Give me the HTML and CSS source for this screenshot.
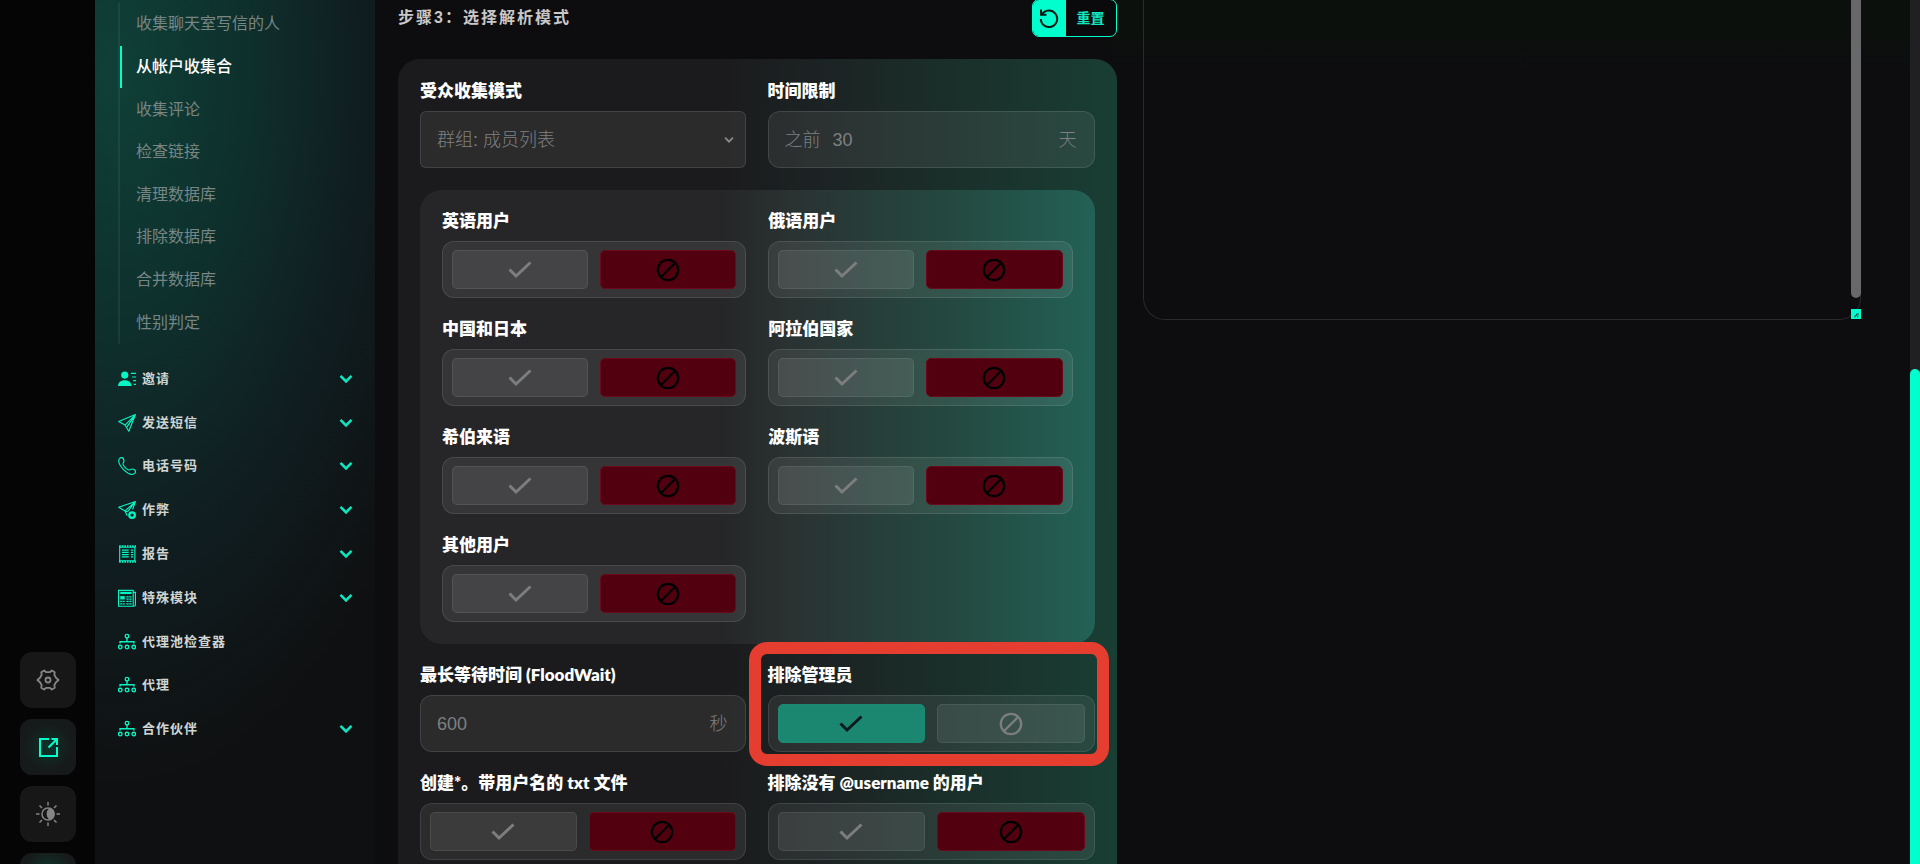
FILE: index.html
```html
<!DOCTYPE html>
<html lang="zh-CN">
<head>
<meta charset="utf-8">
<title>步骤3：选择解析模式</title>
<link rel="stylesheet" href="styles.css">
</head>
<body>
<svg class="sprite" aria-hidden="true">
  <symbol id="check" viewBox="0 0 24 24"><path d="M1.5 11.5 8 18 22.500 4.500" fill="none" stroke="currentColor" stroke-width="3"/></symbol>
  <symbol id="ban" viewBox="0 0 24 24"><circle cx="12" cy="12" r="10.200" fill="none" stroke="currentColor" stroke-width="2.300"/><path d="M4.800 19.200 19.200 4.800" stroke="currentColor" stroke-width="2.300"/></symbol>
  <symbol id="chevron" viewBox="0 0 14 10"><path d="M1.500 1.800 7 7.300l5.500-5.500" fill="none" stroke="currentColor" stroke-width="2.600"/></symbol>
  <symbol id="person" viewBox="0 0 16 16"><circle cx="6" cy="4.500" r="3.200" fill="currentColor"/><path d="M0 14.300c0-3.300 2.500-5.300 6-5.300s6 2 6 5.300z" fill="currentColor"/><path d="M11.500 3H16M12.500 6.200H16M13.500 9.400H16M14 12.800h2" stroke="currentColor"/></symbol>
  <symbol id="plane" viewBox="0 0 16 16"><path d="M15.500.5 9.600 15.300 6.200 9.800.6 6.600zM15.500.5 6.200 9.800M15.500.5 8 11.500" fill="none" stroke="currentColor" stroke-linejoin="round"/></symbol>
  <symbol id="plane-plus" viewBox="0 0 16 16"><path d="M8.500 9.500 6.200 8.800.6 5.600 15.500.5 13 7.500M15.500.5 6.200 8.800M8.200 13.200 6.200 8.800M15.500.5 8.500 9.500" fill="none" stroke="currentColor" stroke-linejoin="round"/><circle cx="12.500" cy="12.500" r="2.500" fill="none" stroke="currentColor" stroke-width="2"/></symbol>
  <symbol id="phone" viewBox="0 0 16 16"><path d="M.6 3.200C.6 1.400 2 .5 3.200.6c1 .1 2 1.600 2.100 2.900.1 1.300-1 1.800-.9 2.700.2 1.600 3.600 5.200 5.400 5.400.9.100 1.500-1 2.800-.9 1.300.1 2.800 1 2.900 2.100.1 1.300-.9 2.700-2.800 2.700C8 15.400.7 8.300.6 3.200z" fill="none" stroke="currentColor"/></symbol>
  <symbol id="report" viewBox="0 0 16 16"><path d="M1.500 1v14M15 1v14" fill="none" stroke="currentColor"/><path d="M1 1h15M1 15h15" stroke="currentColor" stroke-width="1.600" stroke-dasharray="1.500 .8"/><path d="M1 2.200h14.500M1 13.800h14.500" stroke="currentColor" stroke-width=".7"/><path d="M3.500 4.500h6M3.500 6.500h6M3.500 8.500h6M3.500 10.500h6M11.500 4.500h2M11.500 6.500h2M11.500 8.500h2M11.500 10.500h2" stroke="currentColor"/></symbol>
  <symbol id="news" viewBox="0 0 16 16"><path d="M.5 15.300V1.200h13v14zM13.500 3h2v11a1.300 1.300 0 0 1-1.300 1.300H.5" fill="none" stroke="currentColor"/><path d="M2 3.500h10" stroke="currentColor" stroke-width="2"/><path d="M2 6.300h4v3H2z" fill="currentColor"/><path d="M2 11h4M2 13.200h4M7.500 7h4.500M7.500 9h4.500M7.500 11h4.500M7.500 13.200h4.500" stroke="currentColor" stroke-dasharray="2 .5"/></symbol>
  <symbol id="network" viewBox="0 0 16 16"><g fill="none" stroke="currentColor" stroke-width="1.200"><circle cx="8" cy="2.800" r="1.600"/><circle cx="2" cy="12.500" r="1.600"/><circle cx="8" cy="12.500" r="1.600"/><circle cx="14" cy="12.500" r="1.600"/><path d="M8 4.300V8M1.800 9.300V7.800h12.400v1.500"/></g></symbol>
</svg>

<div class="app">
  <aside class="rail">
    <a class="rail-top" href="#">设置面板</a>
    <div class="rail-actions">
      <button class="rail-button" aria-label="设置"><svg viewBox="0 0 24 24" fill="none" stroke="currentColor" stroke-width="1.800" stroke-linejoin="round"><path d="M8.200 2.500 10 4.200h4l1.800-1.700 3 1.700-.5 2.600 1.700 3L22.600 12 20 14.200l-1.700 3 .5 2.600-3 1.700-1.800-1.700h-4l-1.800 1.700-3-1.700.5-2.600-1.700-3L1.400 12 4 9.800l1.700-3-.5-2.600z"/><circle cx="12" cy="12" r="2.500"/></svg></button>
      <button class="rail-button active" aria-label="打开"><svg viewBox="0 0 24 24" fill="none" stroke="currentColor" stroke-width="2"><path d="M13 4H4v17h17v-9M12.500 12.500 20 5M15.500 4H21v6"/></svg></button>
      <button class="rail-button" aria-label="主题"><svg viewBox="0 0 24 24" fill="none" stroke="currentColor" stroke-width="1.500"><circle cx="12" cy="12" r="6"/><path d="M14 6.500a5.800 5.800 0 0 1 0 11 7 7 0 0 1 0-11z" fill="currentColor"/><path d="M12 0v3.500M12 20.500V24M0 12h3.500M20.500 12H24M3.500 3.500 6 6M18 18l2.500 2.500M3.500 20.500 6 18M18 6l2.500-2.500"/></svg></button>
      <button class="rail-button last" aria-label="更多"></button>
    </div>
  </aside>

  <nav class="sidebar">
    <ul class="submenu">
      <li><a href="#">收集聊天室写信的人</a></li>
      <li><a class="current" href="#">从帐户收集合</a></li>
      <li><a href="#">收集评论</a></li>
      <li><a href="#">检查链接</a></li>
      <li><a href="#">清理数据库</a></li>
      <li><a href="#">排除数据库</a></li>
      <li><a href="#">合并数据库</a></li>
      <li><a href="#">性别判定</a></li>
    </ul>
    <ul class="menu">
      <li><a href="#"><svg class="glyph"><use href="#person"/></svg><span>邀请</span><svg class="chevron"><use href="#chevron"/></svg></a></li>
      <li><a href="#"><svg class="glyph"><use href="#plane"/></svg><span>发送短信</span><svg class="chevron"><use href="#chevron"/></svg></a></li>
      <li><a href="#"><svg class="glyph"><use href="#phone"/></svg><span>电话号码</span><svg class="chevron"><use href="#chevron"/></svg></a></li>
      <li><a href="#"><svg class="glyph"><use href="#plane-plus"/></svg><span>作弊</span><svg class="chevron"><use href="#chevron"/></svg></a></li>
      <li><a href="#"><svg class="glyph"><use href="#report"/></svg><span>报告</span><svg class="chevron"><use href="#chevron"/></svg></a></li>
      <li><a href="#"><svg class="glyph"><use href="#news"/></svg><span>特殊模块</span><svg class="chevron"><use href="#chevron"/></svg></a></li>
      <li><a href="#"><svg class="glyph"><use href="#network"/></svg><span>代理池检查器</span></a></li>
      <li><a href="#"><svg class="glyph"><use href="#network"/></svg><span>代理</span></a></li>
      <li><a href="#"><svg class="glyph"><use href="#network"/></svg><span>合作伙伴</span><svg class="chevron"><use href="#chevron"/></svg></a></li>
    </ul>
  </nav>

  <main class="content">
    <section class="step">
      <header class="step-header">
        <h2>步骤3：选择解析模式</h2>
        <button class="reset"><span class="reset-icon"><svg viewBox="0 0 20 20" fill="none" stroke="currentColor" stroke-width="2"><path d="M3 6.500A8.200 8.200 0 1 1 1.800 11"/><path d="M2 1.500v5.200h5.500"/></svg></span><span class="reset-text">重置</span></button>
      </header>

      <form class="card">
        <div class="field">
          <label class="label" for="mode">受众收集模式</label>
          <div class="select-wrap">
            <select id="mode" class="control"><option>群组: 成员列表</option></select>
            <svg class="select-arrow"><use href="#chevron"/></svg>
          </div>
        </div>
        <div class="field">
          <label class="label" for="days">时间限制</label>
          <div class="control input-box"><span>之前</span><input id="days" type="text" value="30"><span>天</span></div>
        </div>

        <div class="group">
          <div class="field">
            <span class="label" id="l-en">英语用户</span>
            <div class="toggle" role="radiogroup" aria-labelledby="l-en">
              <label class="option"><input type="radio" name="en" aria-label="是"><svg><use href="#check"/></svg></label>
              <label class="option no"><input type="radio" name="en" aria-label="否" checked><svg><use href="#ban"/></svg></label>
            </div>
          </div>
          <div class="field">
            <span class="label" id="l-ru">俄语用户</span>
            <div class="toggle" role="radiogroup" aria-labelledby="l-ru">
              <label class="option"><input type="radio" name="ru" aria-label="是"><svg><use href="#check"/></svg></label>
              <label class="option no"><input type="radio" name="ru" aria-label="否" checked><svg><use href="#ban"/></svg></label>
            </div>
          </div>
          <div class="field">
            <span class="label" id="l-cn">中国和日本</span>
            <div class="toggle" role="radiogroup" aria-labelledby="l-cn">
              <label class="option"><input type="radio" name="cn" aria-label="是"><svg><use href="#check"/></svg></label>
              <label class="option no"><input type="radio" name="cn" aria-label="否" checked><svg><use href="#ban"/></svg></label>
            </div>
          </div>
          <div class="field">
            <span class="label" id="l-ar">阿拉伯国家</span>
            <div class="toggle" role="radiogroup" aria-labelledby="l-ar">
              <label class="option"><input type="radio" name="ar" aria-label="是"><svg><use href="#check"/></svg></label>
              <label class="option no"><input type="radio" name="ar" aria-label="否" checked><svg><use href="#ban"/></svg></label>
            </div>
          </div>
          <div class="field">
            <span class="label" id="l-he">希伯来语</span>
            <div class="toggle" role="radiogroup" aria-labelledby="l-he">
              <label class="option"><input type="radio" name="he" aria-label="是"><svg><use href="#check"/></svg></label>
              <label class="option no"><input type="radio" name="he" aria-label="否" checked><svg><use href="#ban"/></svg></label>
            </div>
          </div>
          <div class="field">
            <span class="label" id="l-fa">波斯语</span>
            <div class="toggle" role="radiogroup" aria-labelledby="l-fa">
              <label class="option"><input type="radio" name="fa" aria-label="是"><svg><use href="#check"/></svg></label>
              <label class="option no"><input type="radio" name="fa" aria-label="否" checked><svg><use href="#ban"/></svg></label>
            </div>
          </div>
          <div class="field">
            <span class="label" id="l-other">其他用户</span>
            <div class="toggle" role="radiogroup" aria-labelledby="l-other">
              <label class="option"><input type="radio" name="other" aria-label="是"><svg><use href="#check"/></svg></label>
              <label class="option no"><input type="radio" name="other" aria-label="否" checked><svg><use href="#ban"/></svg></label>
            </div>
          </div>
        </div>

        <div class="field">
          <label class="label" for="wait">最长等待时间 (FloodWait)</label>
          <div class="control input-box"><input id="wait" type="text" value="600"><span>秒</span></div>
        </div>
        <div class="field highlighted">
          <span class="label" id="l-admin">排除管理员</span>
          <div class="toggle" role="radiogroup" aria-labelledby="l-admin">
            <label class="option yes"><input type="radio" name="admin" aria-label="是" checked><svg><use href="#check"/></svg></label>
            <label class="option no"><input type="radio" name="admin" aria-label="否"><svg><use href="#ban"/></svg></label>
          </div>
        </div>
        <div class="field">
          <span class="label" id="l-txt">创建*。带用户名的 txt 文件</span>
          <div class="toggle" role="radiogroup" aria-labelledby="l-txt">
            <label class="option"><input type="radio" name="txt" aria-label="是"><svg><use href="#check"/></svg></label>
            <label class="option no"><input type="radio" name="txt" aria-label="否" checked><svg><use href="#ban"/></svg></label>
          </div>
        </div>
        <div class="field">
          <span class="label" id="l-name">排除没有 @username 的用户</span>
          <div class="toggle" role="radiogroup" aria-labelledby="l-name">
            <label class="option"><input type="radio" name="uname" aria-label="是"><svg><use href="#check"/></svg></label>
            <label class="option no"><input type="radio" name="uname" aria-label="否" checked><svg><use href="#ban"/></svg></label>
          </div>
        </div>
      </form>
    </section>

    <section class="output">
      <textarea class="log" aria-label="日志"></textarea>
      <div class="log-thumb"></div>
      <svg class="log-grip" viewBox="0 0 10 10"><path d="M0 0h10v10H0z" fill="#0fc"/><path d="M4 8.500V6.500h1.500V5H8M6.500 8.500V7h1" fill="none" stroke="#0a4a40"/></svg>
    </section>
  </main>
  <div class="page-scroll"><div class="page-thumb"></div></div>
</div>
</body>
</html>
```

FILE: styles.css
```css
* { box-sizing: border-box; }

body {
  margin: 0;
  background: #0d0d0f;
  color: #fff;
  font-family: "Liberation Sans", "Noto Sans CJK SC", sans-serif;
}

a { color: inherit; text-decoration: none; }
ul { list-style: none; margin: 0; padding: 0; }
button { font-family: inherit; cursor: pointer; }
.sprite { display: none; }

.app {
  display: flex;
  height: 100vh;
  overflow: hidden;
}

/* Icon rail */
.rail {
  display: flex;
  flex-direction: column;
  justify-content: space-between;
  flex: 0 0 95px;
  margin-bottom: -45px;
  padding: 0 19px 0 20px;
  background: #050505;
}
.rail-top {
  margin-top: -14px;
  font-size: 13px;
  line-height: 16px;
  text-align: center;
  color: #999;
}
.rail-actions { display: grid; gap: 11px; }
.rail-button {
  display: grid;
  place-items: center;
  height: 56px;
  padding: 0;
  border: 0;
  border-radius: 12px;
  background: #171717;
  color: #858585;
}
.rail-button svg { width: 24px; height: 24px; }
.rail-button.active { color: #0fc; background: radial-gradient(circle, #0d332a 0, #171a1a 60%); }
.rail-button.last { background: radial-gradient(circle at 50% 40%, #0d3d30 0, #171a1a 60%); }

/* Sidebar */
.sidebar {
  flex: 0 0 280px;
  padding-top: 3px;
  background: radial-gradient(ellipse 310px 610px at 20px 70px, #0f4037 0, #0e302d 42%, #101f22 75%, #0f1011 118%);
}
.submenu {
  display: grid;
  grid-auto-rows: 1fr;
  height: 341px;
  margin-left: 23px;
  border-left: 2px solid rgba(255, 255, 255, .06);
}
.submenu a {
  display: flex;
  align-items: center;
  height: 100%;
  padding-left: 14px;
  border-left: 2px solid transparent;
  font-size: 16px;
  line-height: 20px;
  color: #788583;
}
.submenu .current {
  border-left-color: #0fc;
  font-weight: 500;
  color: #fff;
}
.menu {
  display: grid;
  grid-auto-rows: 1fr;
  height: 394px;
  margin-top: 13px;
}
.menu a {
  display: flex;
  align-items: center;
  height: 100%;
  padding: 0 22px 0 23px;
  font-size: 13px;
  font-weight: 700;
  line-height: 16px;
  letter-spacing: 1px;
  color: #d0d5d4;
}
.glyph {
  width: 18px;
  height: 18px;
  margin-right: 6px;
  color: #08f5c4;
}
.chevron {
  width: 14px;
  height: 10px;
  margin-left: auto;
  color: #10e5c0;
}

/* Main area */
.content {
  display: grid;
  grid-template-columns: 1fr 1fr;
  gap: 26px;
  flex: 1;
  align-items: start;
  padding: 0 49px 0 23px;
  background: linear-gradient(#0c100c 30px, #0d0d0f) no-repeat right top / 52% 70px;
}
.step-header {
  display: flex;
  align-items: center;
  justify-content: space-between;
  height: 35px;
  margin-bottom: 24px;
}
.step-header h2 {
  margin: 0;
  font-size: 16px;
  font-weight: 700;
  line-height: 20px;
  letter-spacing: 2px;
  color: #c8c8c8;
}
.reset {
  display: flex;
  height: 38px;
  padding: 0;
  overflow: hidden;
  border: 1px solid #0fc;
  border-radius: 7px;
  background: #0a0a0c;
  color: #10e8c0;
  font-size: 14px;
  font-weight: 700;
  line-height: 18px;
}
.reset-icon {
  display: grid;
  place-items: center;
  width: 33px;
  height: 100%;
  background: #0fc;
  color: #0a1a16;
}
.reset-icon svg { width: 20px; height: 20px; }
.reset-text { align-self: center; width: 50px; }

.card {
  display: grid;
  grid-template-columns: 1fr 1fr;
  gap: 22px;
  min-height: 880px;
  align-content: start;
  padding: 23px 22px;
  border-radius: 22px;
  background: linear-gradient(90deg, #1b1b1d 45%, #1c2223 58%, #1a312b 80%, #193e34);
}
.group {
  grid-column: 1 / -1;
  display: grid;
  grid-template-columns: 1fr 1fr;
  gap: 22px;
  padding: 22px;
  border-radius: 22px;
  background: linear-gradient(90deg, #262628 45%, #2a3232 55%, #24483f 78%, #236156);
}
.field {
  position: relative;
  display: grid;
  gap: 12px;
  align-content: start;
}
.label {
  font-family: Lato, "Noto Sans CJK SC", sans-serif;
  font-size: 17px;
  font-weight: 800;
  line-height: 17px;
}
.control {
  width: 100%;
  height: 57px;
  border: 1px solid rgba(255, 255, 255, .11);
  border-radius: 12px;
  background: rgba(255, 255, 255, .07);
  color: #7e8081;
  font-family: "Liberation Sans", "Noto Sans CJK SC", sans-serif;
  font-size: 18px;
  font-weight: 300;
}
.select-wrap { position: relative; }
select.control {
  display: block;
  appearance: none;
  padding: 0 16px;
  border-radius: 6px;
}
.select-arrow {
  position: absolute;
  right: 12px;
  top: 25px;
  width: 10px;
  height: 8px;
  color: #8a8a8a;
  pointer-events: none;
}
.input-box {
  display: flex;
  align-items: center;
  gap: 12px;
  padding: 0 17px 0 16px;
  line-height: 20px;
}
.input-box input {
  flex: 1;
  min-width: 0;
  padding: 0;
  border: 0;
  background: none;
  color: inherit;
  font: inherit;
}

.toggle {
  display: grid;
  grid-template-columns: 1fr 1fr;
  gap: 12px;
  height: 57px;
  padding: 8px 9px;
  border: 1px solid rgba(255, 255, 255, .1);
  border-radius: 12px;
  background: rgba(255, 255, 255, .07);
}
.option {
  display: grid;
  place-items: center;
  border: 1px solid rgba(255, 255, 255, .08);
  border-radius: 5px;
  background: rgba(255, 255, 255, .08);
  color: #7c7e7e;
  cursor: pointer;
}
.option svg { width: 24px; height: 24px; }
.option input {
  position: absolute;
  appearance: none;
  margin: 0;
}
.option.no:has(:checked) {
  border-color: #6a0a1a;
  background: #52000f;
  color: #000;
}
.option.yes:has(:checked) {
  border-color: #1c8a72;
  background: #1c8770;
  color: #0b1a1c;
}
.highlighted::after {
  content: "";
  position: absolute;
  inset: -24px -14px -14px -19px;
  border: 12px solid #e53d30;
  border-radius: 18px;
  pointer-events: none;
}

/* Output panel */
.output { position: relative; height: 320px; }
.log {
  display: block;
  width: 100%;
  height: 100%;
  resize: none;
  border: 1px solid #2a2a2c;
  border-top: 0;
  border-radius: 0 0 22px 22px;
  background: none;
  color: inherit;
}
.log-thumb {
  position: absolute;
  top: 0;
  right: 0;
  width: 10px;
  height: 298px;
  border-radius: 0 0 5px 5px;
  background: #68686a;
}
.log-grip {
  position: absolute;
  right: 0;
  bottom: 1px;
  width: 10px;
  height: 10px;
}

.page-scroll {
  display: flex;
  flex: 0 0 10px;
  flex-direction: column;
  background: #202022;
}
.page-thumb {
  flex: 1;
  margin-top: 369px;
  border-radius: 5px 5px 0 0;
  background: #0fc;
}
```
